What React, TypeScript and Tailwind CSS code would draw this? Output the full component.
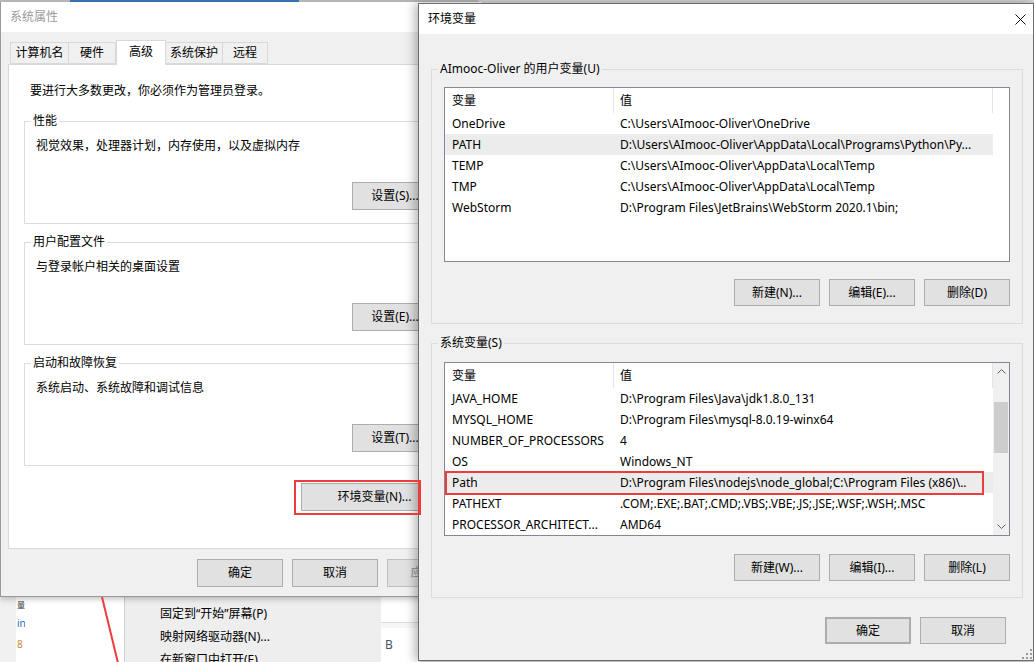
import React from "react";

type Row = [string, string];

const userVars: Row[] = [
  ["OneDrive", "C:\\Users\\AImooc-Oliver\\OneDrive"],
  ["PATH", "D:\\Users\\AImooc-Oliver\\AppData\\Local\\Programs\\Python\\Py..."],
  ["TEMP", "C:\\Users\\AImooc-Oliver\\AppData\\Local\\Temp"],
  ["TMP", "C:\\Users\\AImooc-Oliver\\AppData\\Local\\Temp"],
  ["WebStorm", "D:\\Program Files\\JetBrains\\WebStorm 2020.1\\bin;"],
];

const sysVars: Row[] = [
  ["JAVA_HOME", "D:\\Program Files\\Java\\jdk1.8.0_131"],
  ["MYSQL_HOME", "D:\\Program Files\\mysql-8.0.19-winx64"],
  ["NUMBER_OF_PROCESSORS", "4"],
  ["OS", "Windows_NT"],
  ["Path", "D:\\Program Files\\nodejs\\node_global;C:\\Program Files (x86)\\.."],
  ["PATHEXT", ".COM;.EXE;.BAT;.CMD;.VBS;.VBE;.JS;.JSE;.WSF;.WSH;.MSC"],
  ["PROCESSOR_ARCHITECT...", "AMD64"],
];

function Btn({ children, className }: { children: React.ReactNode; className: string }) {
  return (
    <div className={`flex shrink-0 items-center justify-center border border-[#adadad] bg-[#e1e1e1] leading-[16px] ${className}`}>
      {children}
    </div>
  );
}

function Chevron({ down }: { down?: boolean }) {
  return (
    <svg width="9" height="5" viewBox="0 0 9 5">
      <path d={down ? "M0.5 0.5 L4.5 4.5 L8.5 0.5" : "M0.5 4.5 L4.5 0.5 L8.5 4.5"} fill="none" stroke="#606060" strokeWidth="1" />
    </svg>
  );
}

function Scrollbar() {
  return (
    <div className="flex w-[16px] flex-col bg-[#f0f0f0]">
      <div className="flex h-[17px] items-center justify-center">
        <Chevron />
      </div>
      <div className="flex-1 px-[1px]">
        <div className="mt-[22px] h-[51px] bg-[#cdcdcd]" />
      </div>
      <div className="flex h-[17px] items-center justify-center">
        <Chevron down />
      </div>
    </div>
  );
}

function VarList({ rows, selected, marked, scroll, className }: { rows: Row[]; selected: number; marked?: number; scroll?: boolean; className: string }) {
  return (
    <div className={`ml-[12px] flex w-[566px] border border-[#828790] bg-white ${className}`}>
      <div className="flex w-[548px] flex-col">
        <div className="flex h-[25px] shrink-0">
          <div className="w-[169px] border-r border-[#e5e5e5] pl-[7px] leading-[25px]">变量</div>
          <div className="flex-1 border-r border-[#e5e5e5] pl-[6px] leading-[25px]">值</div>
        </div>
        {rows.map(([k, v], i) => (
          <div key={k} className={`relative flex h-[21px] shrink-0 items-center ${i === selected ? "bg-[#ececec]" : ""}`}>
            <div className="w-[169px] overflow-hidden whitespace-nowrap pl-[7px]">{k}</div>
            <div className="flex-1 overflow-hidden whitespace-nowrap pl-[6px]">{v}</div>
            {i === marked && <div className="absolute -top-px -bottom-[2px] left-0 right-[9px] border-2 border-[#ee3b3b]" />}
          </div>
        ))}
      </div>
      {scroll && <Scrollbar />}
    </div>
  );
}

function LeftGroup({ label, text, btn }: { label: string; text: string; btn: string }) {
  return (
    <fieldset className="ml-[15px] mt-[10px] w-[424px] border border-[#dcdcdc] first:mt-[14px]">
      <legend className="ml-[6px] px-[2px] leading-[16px]">{label}</legend>
      <div className="pl-[11px] pt-[9px] leading-[16px]">{text}</div>
      <div className="flex justify-end pb-[13px] pr-[9px] pt-[28px]">
        <Btn className="h-[28px] w-[86px]">{btn}</Btn>
      </div>
    </fieldset>
  );
}

function SystemProps() {
  const tabs = ["计算机名", "硬件", "高级", "系统保护", "远程"];
  const widths = ["w-[59px]", "w-[48px]", "w-[50px]", "w-[58px]", "w-[46px]"];
  return (
    <div className="absolute left-0 top-[2px] flex h-[595px] w-[482px] flex-col border-b border-l border-[#9a9a9a] bg-[#f0f0f0] shadow-[0_2px_6px_rgba(0,0,0,0.25)]">
      <div className="flex h-[30px] shrink-0 items-center bg-white pl-[9px] text-[#9b9b9b]">系统属性</div>
      <div className="flex flex-col px-[7px] pt-[8px]">
        <div className="relative z-10 flex h-[24px] items-end pl-[2px]">
          {tabs.map((t, i) =>
            i === 2 ? (
              <div key={t} className={`-mb-px flex h-[25px] items-center justify-center border border-b-0 border-[#d9d9d9] bg-white pb-[2px] ${widths[i]}`}>
                {t}
              </div>
            ) : (
              <div key={t} className={`flex h-[22px] items-center justify-center border border-[#d9d9d9] bg-[#f0f0f0] ${i > 0 ? "-ml-px" : ""} ${widths[i]}`}>
                {t}
              </div>
            )
          )}
        </div>
        <div className="flex h-[485px] flex-col border border-[#d9d9d9] bg-white">
          <div className="pl-[21px] pt-[18px] leading-[16px]">要进行大多数更改，你必须作为管理员登录。</div>
          <div className="flex flex-col">
            <LeftGroup label="性能" text="视觉效果，处理器计划，内存使用，以及虚拟内存" btn="设置(S)..." />
            <LeftGroup label="用户配置文件" text="与登录帐户相关的桌面设置" btn="设置(E)..." />
            <LeftGroup label="启动和故障恢复" text="系统启动、系统故障和调试信息" btn="设置(T)..." />
          </div>
          <div className="ml-[15px] flex w-[424px] justify-end pt-[17px]">
            <Btn className="h-[28px] w-[147px]">环境变量(N)...</Btn>
          </div>
        </div>
        <div className="flex justify-end gap-[9px] pr-[2px] pt-[10px]">
          <Btn className="h-[28px] w-[86px]">确定</Btn>
          <Btn className="h-[28px] w-[86px]">取消</Btn>
          <Btn className="h-[28px] w-[86px] border-[#bfbfbf] bg-[#cccccc] text-[#8a8a8a]">应用(A)</Btn>
        </div>
      </div>
    </div>
  );
}

function EnvVars() {
  return (
    <div className="absolute left-[418px] top-[3px] flex h-[658px] w-[616px] flex-col border border-[#6d6d6d] bg-[#f0f0f0] shadow-[-3px_0_10px_rgba(0,0,0,0.3)]">
      <div className="flex h-[30px] shrink-0 items-center justify-between bg-white pl-[9px] pr-[7px]">
        <span>环境变量</span>
        <svg width="11" height="11" viewBox="0 0 11 11">
          <path d="M0.5 0.5 L10.5 10.5 M10.5 0.5 L0.5 10.5" stroke="#111" strokeWidth="1" />
        </svg>
      </div>
      <div className="flex flex-col pl-[12px] pr-[10px] pt-[27px]">
        <fieldset className="border border-[#dcdcdc]">
          <legend className="ml-[6px] px-[2px] leading-[16px]">AImooc-Oliver 的用户变量(U)</legend>
          <VarList rows={userVars} selected={1} className="mt-[10px] h-[175px]" />
          <div className="flex justify-end gap-[9px] pb-[17px] pr-[12px] pt-[17px]">
            <Btn className="h-[27px] w-[86px]">新建(N)...</Btn>
            <Btn className="h-[27px] w-[86px]">编辑(E)...</Btn>
            <Btn className="h-[27px] w-[86px]">删除(D)</Btn>
          </div>
        </fieldset>
        <fieldset className="mt-[11px] border border-[#dcdcdc]">
          <legend className="ml-[6px] px-[2px] leading-[16px]">系统变量(S)</legend>
          <VarList rows={sysVars} selected={4} marked={4} scroll className="mt-[11px] h-[174px]" />
          <div className="flex justify-end gap-[9px] pb-[16px] pr-[12px] pt-[18px]">
            <Btn className="h-[27px] w-[86px]">新建(W)...</Btn>
            <Btn className="h-[27px] w-[86px]">编辑(I)...</Btn>
            <Btn className="h-[27px] w-[86px]">删除(L)</Btn>
          </div>
        </fieldset>
        <div className="flex justify-end gap-[9px] pr-[17px] pt-[19px]">
          <Btn className="h-[27px] w-[86px] border-2 border-[#0078d7]">确定</Btn>
          <Btn className="h-[27px] w-[86px]">取消</Btn>
        </div>
      </div>
      <svg className="absolute bottom-[1px] right-[1px]" width="10" height="10" viewBox="0 0 10 10" fill="#9a9a9a">
        <rect x="8" y="0" width="2" height="2" />
        <rect x="4" y="4" width="2" height="2" />
        <rect x="8" y="4" width="2" height="2" />
        <rect x="0" y="8" width="2" height="2" />
        <rect x="4" y="8" width="2" height="2" />
        <rect x="8" y="8" width="2" height="2" />
      </svg>
    </div>
  );
}

function Desktop() {
  return (
    <div className="absolute left-0 top-[597px] flex h-[65px] w-[420px]">
      <div className="w-[16px] bg-[#f0f0f0]" />
      <div className="flex w-[9px] flex-col bg-white pl-[1px] pt-[2px] leading-[21px]">
        <span className="text-[8px] leading-[12px] text-[#333]">量</span>
        <span className="pt-[2px] text-[10px] text-[#1e6fc8]">in</span>
        <span className="text-[10px] text-[#c98a1d]">8</span>
      </div>
      <div className="w-[99px] bg-white" />
      <div className="flex w-[257px] flex-col border-l border-[#cfcfcf] bg-[#eeeeee] pl-[35px] pt-[5px] leading-[23px]">
        <span>固定到“开始”屏幕(P)</span>
        <span>映射网络驱动器(N)...</span>
        <span>在新窗口中打开(E)</span>
      </div>
      <div className="flex flex-1 flex-col bg-white">
        <div className="mt-[25px] h-[6px] border-t border-[#dddddd] bg-[#f7f7f7]" />
        <span className="pl-[4px] pt-[9px] leading-[16px] text-[#445566]">B</span>
      </div>
    </div>
  );
}

export default function App() {
  return (
    <div className="relative h-[662px] w-[1034px] overflow-hidden bg-[#d9d9d9] text-[12px] text-black [font-family:'Noto_Sans','Noto_Sans_CJK_SC',sans-serif]">
      <div className="flex h-[3px]">
        <div className="w-[70px] bg-[#bdbdbd]" />
        <div className="w-[229px] bg-[#3a76b8]" />
        <div className="w-[179px] bg-[#bcbcbc]" />
        <div className="flex-1 bg-[#d6d6d6]" />
      </div>
      <Desktop />
      <SystemProps />
      <svg className="absolute left-[96px] top-[597px]" width="28" height="65" viewBox="0 0 28 65">
        <line x1="6" y1="0" x2="22" y2="66" stroke="#ee3b3b" strokeWidth="2" />
      </svg>
      <div className="absolute left-[294px] top-[480px] z-20 h-[35px] w-[127px] border-2 border-[#ee3b3b]" />
      <EnvVars />
      <div className="absolute left-[418px] top-[480px] z-30 h-[35px] w-[3px] bg-[#ee3b3b]" />
    </div>
  );
}
